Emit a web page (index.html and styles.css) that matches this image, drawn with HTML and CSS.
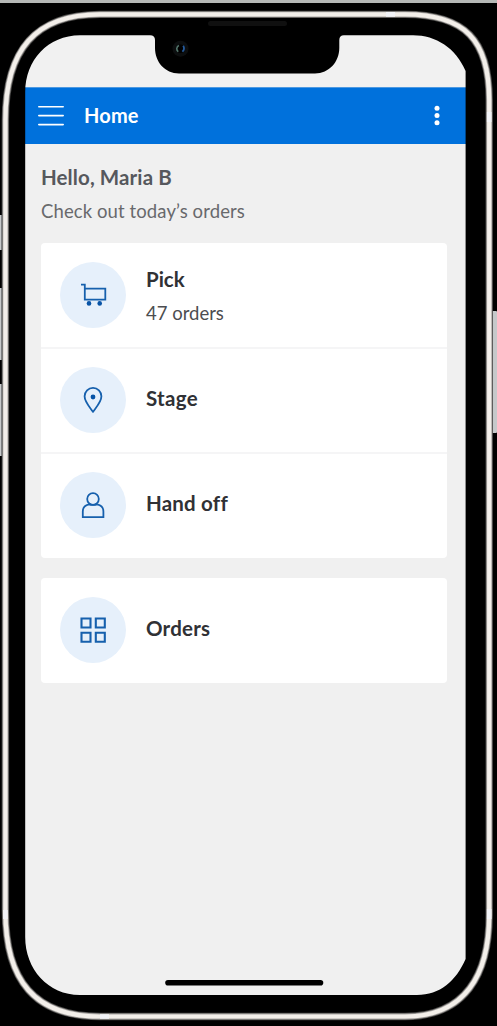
FILE: index.html
```html
<!DOCTYPE html>
<html lang="en">
<head>
<meta charset="utf-8">
<title>Home</title>
<link rel="stylesheet" href="styles.css">
</head>
<body>
<main class="screen">
  <div class="status"></div>
  <header class="bar">
    <svg class="menu" width="26" height="24" viewBox="0 0 26 24"><path d="M.8 3.8h24.4M.8 12.6h24.4M.8 21.6h24.4" stroke="#fff" stroke-width="1.6" stroke-linecap="round"/></svg>
    <h1 class="title">Home</h1>
    <svg class="more" width="6" height="24" viewBox="0 0 6 24" fill="#fff"><circle cx="3" cy="5.3" r="2.5"/><circle cx="3" cy="12.5" r="2.5"/><circle cx="3" cy="19.7" r="2.5"/></svg>
  </header>
  <section class="content">
    <h2 class="hello">Hello, Maria B</h2>
    <p class="sub">Check out today’s orders</p>
    <div class="card">
      <div class="row">
        <svg class="icon" viewBox="0 0 66 66"><path d="M21 22.7h3.8v15h20.5v-11H24.8"/><g class="solid"><circle cx="29" cy="41.4" r="2.3"/><circle cx="39.7" cy="41.4" r="2.3"/></g></svg>
        <div class="text"><h3 class="name pick">Pick</h3><p class="count">47 orders</p></div>
      </div>
      <div class="row">
        <svg class="icon" viewBox="0 0 66 66"><path d="M33 44.8C30 40.5 24.6 35 24.6 29.3a8.4 8.4 0 0 1 16.8 0C41.4 35 36 40.5 33 44.8Z"/><circle class="solid" cx="33" cy="30" r="2.4"/></svg>
        <h3 class="name stage">Stage</h3>
      </div>
      <div class="row">
        <svg class="icon" viewBox="0 0 66 66"><circle cx="33" cy="27" r="5.8"/><path d="M28.8 32.3c-3.6.8-6 3.5-6 7.2v5.6h20.6v-5.6c0-3.7-2.4-6.4-6-7.2M28.6 32.3q4.4 1.2 8.8 0"/></svg>
        <h3 class="name hand">Hand off</h3>
      </div>
    </div>
    <div class="card">
      <div class="row">
        <svg class="icon grid" viewBox="0 0 66 66"><path d="M21.5 21.5h9v9h-9zM35.8 21.5h9v9h-9zM21.5 35.8h9v9h-9zM35.8 35.8h9v9h-9z"/></svg>
        <h3 class="name orders">Orders</h3>
      </div>
    </div>
  </section>
</main>
<svg class="device" width="497" height="1026" viewBox="0 0 497 1026" fill="none">
  <defs>
    <path id="rim" d="M5.4 120C5.4 50 35 14.4 100 14.4H405C465 14.4 489.2 40 489.2 100V915C489.2 975 465 1016.5 405 1016.5H100C35 1016.5 5.4 981 5.4 911Z"/>
    <linearGradient id="key" x1="0" x2="1"><stop stop-color="#e3e5e5"/><stop offset="1" stop-color="#777b7e"/></linearGradient>
  </defs>
  <path fill="#000" fill-rule="evenodd" d="M0 0H497V1026H0ZM25.2 92C25.2 60 48 35.2 80 35.2H150Q155 35.2 155 40V48C155 62 165 73.4 179 73.4H315C329 73.4 339.3 62 339.3 48V40Q339.3 35.2 344 35.2H413C436 35.2 456 48 465.6 71V959C456 981 440 995 417 995H80C48 995 25.2 969 25.2 937Z"/>
  <path fill="#b5b8b6" d="M0 0h497v3H0z"/>
  <path fill="url(#key)" d="M0 215h2v35H0zM0 288h2v72H0zM0 384h2v72H0z"/>
  <rect x="491" y="311" width="6" height="122" rx="1" fill="#c6c9ca"/>
  <use href="#rim" stroke="#4b4a49" stroke-width="7.4"/>
  <use href="#rim" stroke="#aaa7a4" stroke-width="5.8"/>
  <use href="#rim" stroke="#f3efea" stroke-width="4.2"/>
  <path stroke="#f2f3f7" stroke-width="4.6" d="M386 14.4h9M5.4 910v9M100 1016.5h9M489.2 112v10M489.2 909v10"/>
  <rect x="208" y="21" width="79" height="5" rx="2.5" fill="#101010"/>
  <circle cx="180.5" cy="48.7" r="8" fill="#0c0e0f"/>
  <circle cx="180.5" cy="48.7" r="4.2" fill="#000"/>
  <path stroke="#53756b" stroke-width="1.6" d="M178.8 45.3q-3.8 3.2-.6 6.4"/>
  <path stroke="#255b9d" stroke-width="1.8" d="M183.2 45.7q2 3.3-.8 6"/>
  <path stroke="#000" stroke-width="5.6" stroke-linecap="round" d="M168 982.8H320.5"/>
</svg>
</body>
</html>
```
FILE: styles.css
```css
* { box-sizing: border-box; margin: 0; }
body {
  width: 497px;
  height: 1026px;
  padding: 35px 31px 31px 25px;
  background: #000;
  overflow: hidden;
  position: relative;
  font-family: Lato, "Noto Sans", sans-serif;
  font-variant-ligatures: none;
}
.screen { height: 960px; background: #f0f0f0; }
.status { height: 52px; background: #f1f1f1; }
.bar {
  height: 57px;
  display: flex;
  align-items: center;
  padding: 0 26px 2px 13px;
  background: #0071dc;
  border-top: 1px solid #4e99e0;
  color: #fff;
}
.title { margin-left: 20px; font-size: 20px; line-height: 24px; letter-spacing: .15px; }
.more { margin-left: auto; }
.content { padding: 20px 19px 0 16px; }
.hello { color: #56585d; font-size: 20.5px; line-height: 26px; letter-spacing: .1px; }
.sub { margin-top: 9px; color: #68696c; font-size: 18.5px; line-height: 24px; letter-spacing: .1px; }
.card {
  margin-top: 20px;
  border-radius: 4px;
  background: #fff;
  overflow: hidden;
}
.row { height: 105px; display: flex; align-items: center; gap: 19px; padding: 0 0 1px 19px; }
.row + .row { border-top: 2px solid #f5f5f6; margin-top: -1px; }
.row:nth-child(3) { height: 106px; margin-top: 0; padding-bottom: 2px; }
.icon {
  width: 66px;
  height: 66px;
  margin-right: 1px;
  border-radius: 50%;
  background: #e6f0fb;
  fill: none;
  stroke: #1660ad;
  stroke-width: 1.8;
}
.grid { stroke-width: 2.1; }
.solid { fill: #0753a6; stroke: none; }
.name { color: #303135; font-size: 20.5px; line-height: 26px; }
.row > .name { padding-bottom: 4px; }
.stage { letter-spacing: .3px; }
.hand { letter-spacing: .2px; }
.orders { letter-spacing: .2px; }
.count { margin-top: 9px; color: #4c4d50; font-size: 18.5px; line-height: 24px; }
.device { position: absolute; left: 0; top: 0; pointer-events: none; }
```
